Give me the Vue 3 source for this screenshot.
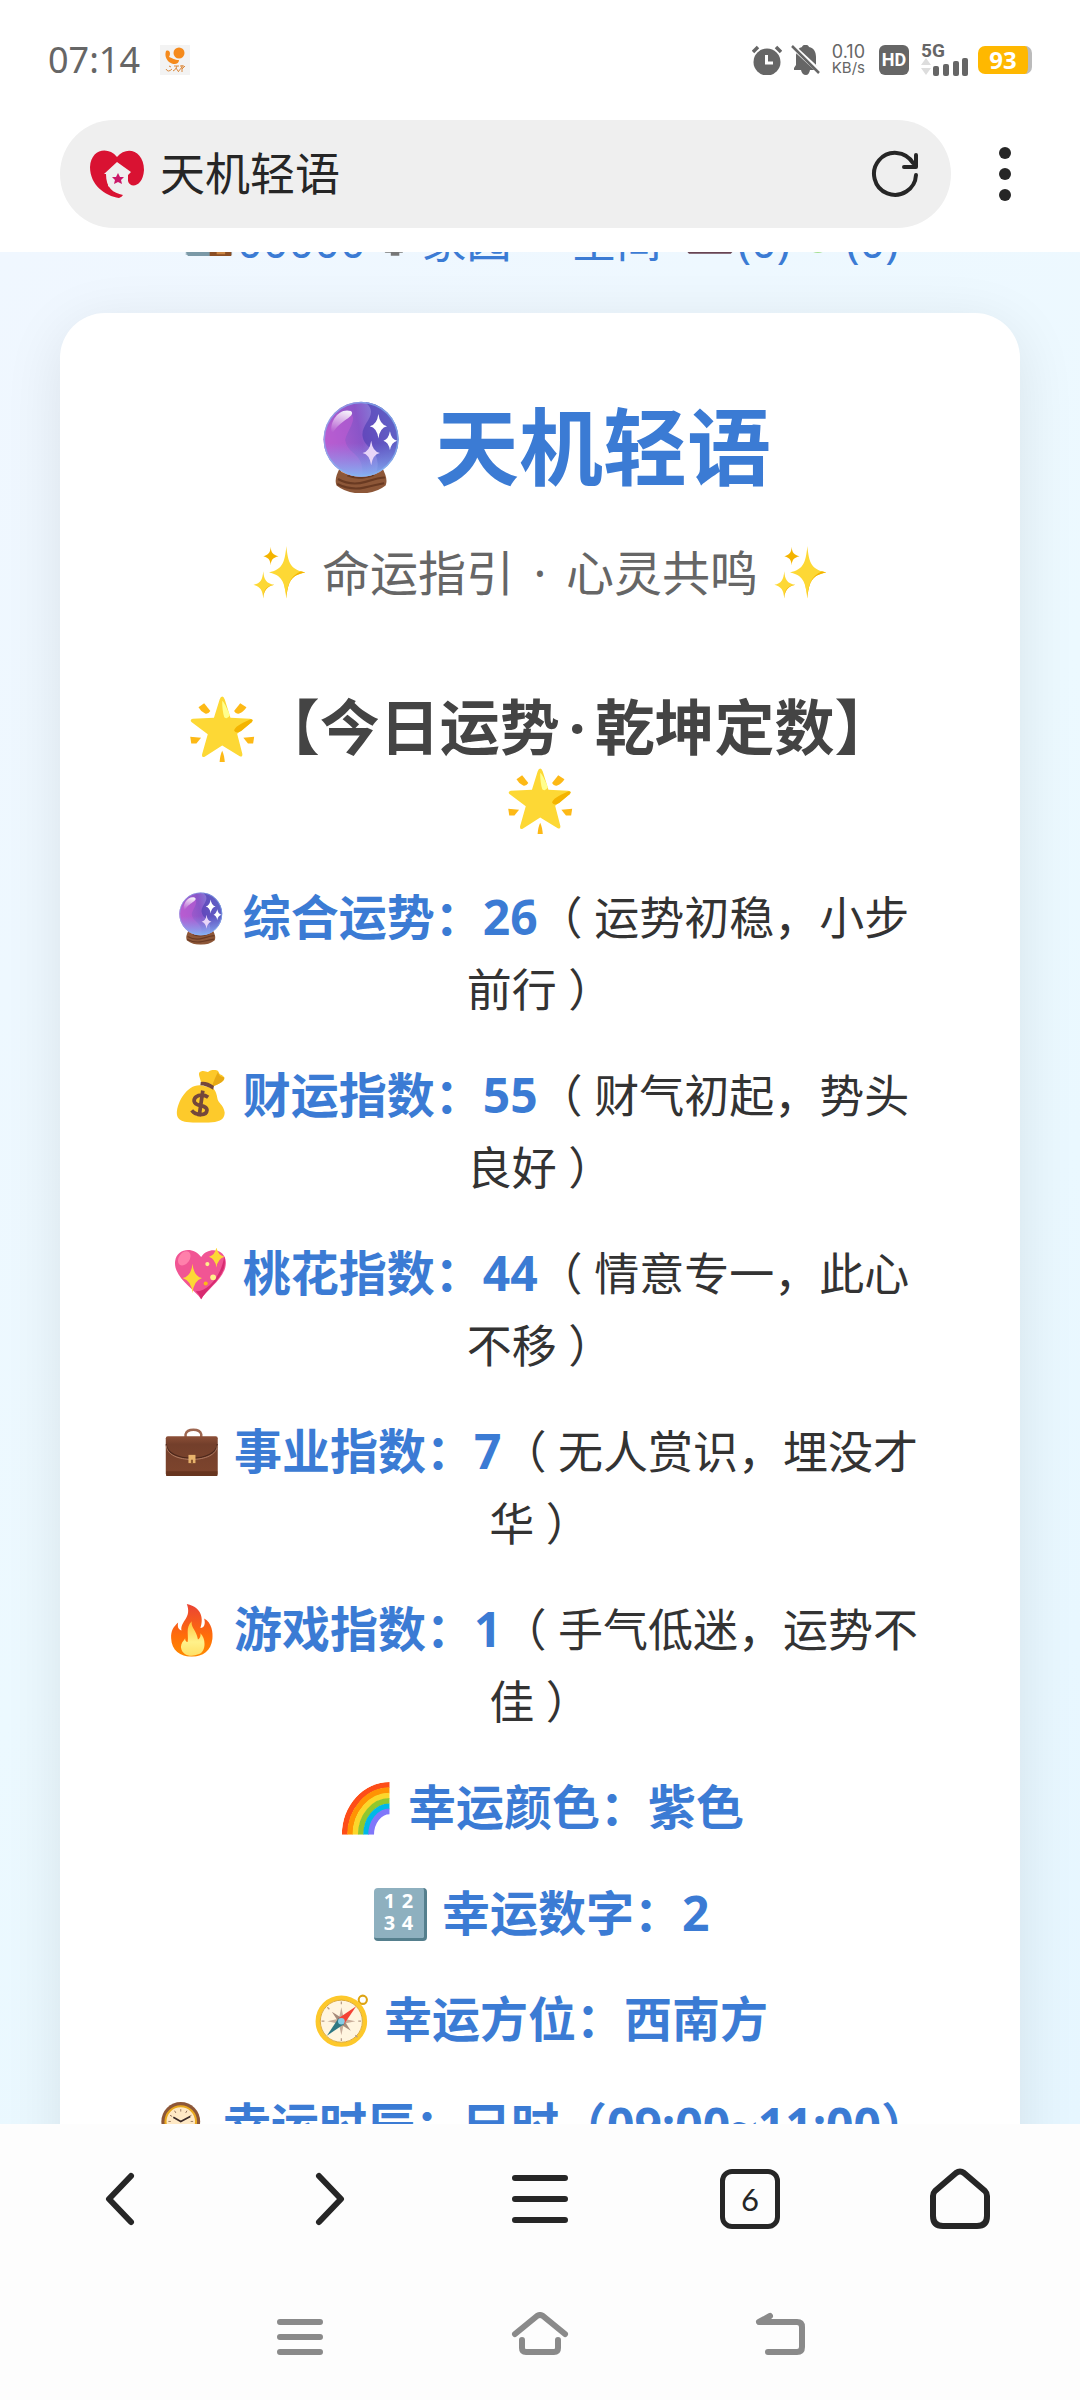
<script setup>
const fortunes = [
  { icon: 'crystal', label: '综合运势', value: '26', note: '运势初稳，小步前行' },
  { icon: 'money', label: '财运指数', value: '55', note: '财气初起，势头良好' },
  { icon: 'heart', label: '桃花指数', value: '44', note: '情意专一，此心不移' },
  { icon: 'briefcase', label: '事业指数', value: '7', note: '无人赏识，埋没才华' },
  { icon: 'fire', label: '游戏指数', value: '1', note: '手气低迷，运势不佳' },
  { icon: 'rainbow', label: '幸运颜色', value: '紫色' },
  { icon: 'numbers', label: '幸运数字', value: '2' },
  { icon: 'compass', label: '幸运方位', value: '西南方' },
  { icon: 'clock', label: '幸运时辰', value: '巳时（09:00~11:00）' },
]
const ticks = Array.from({ length: 12 }, (_, i) => i * 30)
</script>

<template>
  <div class="phone">
    <svg class="defs" width="0" height="0" aria-hidden="true">
      <defs>
        <linearGradient id="g-ball" x1="0" y1="0.6" x2="1" y2="0.4">
          <stop offset="0" stop-color="#b65fd0" /><stop offset="0.5" stop-color="#8a55c8" /><stop offset="1" stop-color="#7fa4e8" />
        </linearGradient>
        <linearGradient id="g-ball-low" x1="0" y1="0" x2="0" y2="1">
          <stop offset="0.55" stop-color="#7f9df0" stop-opacity="0" /><stop offset="1" stop-color="#86b4f4" />
        </linearGradient>
        <linearGradient id="g-shine" x1="0.6" y1="0" x2="0.3" y2="1">
          <stop offset="0" stop-color="#fff" stop-opacity="0.9" /><stop offset="1" stop-color="#fff" stop-opacity="0" />
        </linearGradient>
        <linearGradient id="g-fire" x1="0" y1="0" x2="0" y2="1">
          <stop offset="0" stop-color="#ea4335" /><stop offset="0.6" stop-color="#ff6d0a" /><stop offset="1" stop-color="#ff8a00" />
        </linearGradient>
        <linearGradient id="g-flame" x1="0" y1="0" x2="0" y2="1">
          <stop offset="0" stop-color="#ffc43a" /><stop offset="0.6" stop-color="#fff18a" /><stop offset="1" stop-color="#ffe066" />
        </linearGradient>
        <linearGradient id="g-case" x1="0" y1="0" x2="0" y2="1">
          <stop offset="0" stop-color="#8c4f37" /><stop offset="0.2" stop-color="#733f2b" /><stop offset="1" stop-color="#7e452d" />
        </linearGradient>
        <clipPath id="c-ball"><circle cx="64" cy="53" r="52" /></clipPath>
        <clipPath id="c-rainbow"><path d="M6 128A116 128 0 0 1 122 0V128Z" /></clipPath>
      </defs>

      <symbol id="crystal" viewBox="0 0 128 128">
        <path d="M35 92Q64 108 93 92Q102 108 98 117Q84 128 64 128Q44 128 30 117Q26 108 35 92Z" fill="#8d5738" />
        <path d="M32 108Q50 118 70 112T97 106M31 115Q50 124 68 120T96 114M45 103Q60 110 82 102" fill="none" stroke="#693a22" stroke-width="3" />
        <path d="M37 95Q64 110 91 95V98Q64 112 36 98Z" fill="#fab27b" />
        <circle cx="64" cy="53" r="52" fill="url(#g-ball)" />
        <g clip-path="url(#c-ball)">
          <path d="M68 0C92 18 64 30 66 48C68 68 96 66 84 104L130 60V0Z" fill="#4f3fb4" opacity="0.65" />
          <path d="M30 18C72 10 44 40 42 54C46 76 68 70 66 104H30L4 60Z" fill="#bc5bd2" opacity="0.6" />
          <rect x="10" y="0" width="110" height="106" fill="url(#g-ball-low)" />
          <path d="M24 46C18 30 34 8 50 14C58 22 34 26 24 46Z" fill="url(#g-shine)" />
        </g>
        <circle cx="64" cy="53" r="51" fill="none" stroke="#86b7f0" stroke-width="2" opacity="0.7" />
        <path d="M88 18Q90 33 100 35Q90 37 88 52Q86 37 76 35Q86 33 88 18ZM104 42Q106 54 114 55Q106 57 104 68Q102 57 95 55Q102 53 104 42Z" fill="#fff" />
        <path d="M78 55Q80 70 90 72Q80 74 78 89Q76 74 66 72Q76 70 78 55Z" fill="#e8d5f8" />
      </symbol>

      <symbol id="sparkles" viewBox="0 0 128 128">
        <path d="M80 0C84 43 91 57 126 64C91 71 84 85 80 128C76 85 69 71 38 64C69 57 76 43 80 0Z" fill="#fdd835" />
        <path d="M115 61L126 64C91 71 84 85 80 128C79 98 88 74 115 61Z" fill="#f4b400" />
        <path d="M115 61C85 70 90 80 79 116L72 82L90 66Z" fill="#fdd835" />
        <path d="M24 61C26 83 31 90 51 94C31 99 26 106 24 127C22 106 17 99 0 94C17 90 22 83 24 61Z" fill="#fdd835" />
        <path d="M51 94C34 98 26 106 24 127C24 108 30 97 51 94Z" fill="#f4b400" />
        <path d="M42 2C43 17 48 22 61 25C48 28 43 33 42 47C41 33 36 28 24 25C36 22 41 17 42 2Z" fill="#f4b400" />
      </symbol>

      <symbol id="star" viewBox="0 0 128 128">
        <path d="M64 1Q67 1 69 7L80 42L118 44Q126 45 121 51L93 73L103 112Q104 119 98 117L64 96L30 118Q24 120 25 113L36 74L5 51Q0 46 7 44L48 42L59 7Q61 1 64 1Z" fill="#fdd835" />
        <path d="M119 45Q126 45 121 51L101 68Q91 74 87 67Q88 58 119 45Z" fill="#f4b400" />
        <path d="M64 9Q68 11 79 37Q74 47 68 41Q64 29 64 9Z" fill="#ffff8d" />
        <g fill="#fdb916"><path d="M29 14L41 29Q36 36 31 34Q22 30 18 22Z" /><path d="M99 14L111 22Q106 31 97 34Q91 36 87 29Z" /><path d="M2 79L23 81L14 92H4Z" /><path d="M126 79L105 81L114 92H124Z" /><path d="M64 106Q68 114 69 128H59Q60 114 64 106Z" /></g>
      </symbol>

      <symbol id="money" viewBox="0 0 128 128">
        <path d="M65 32C62 16 54 6 66 3C76 1 81 8 84 3C91-2 104-1 107 4C108 12 117 10 121 18C125 27 104 36 94 40Z" fill="#fdc829" />
        <path d="M92 37Q96 24 106 4Q107 16 121 18Q122 30 92 40Z" fill="#e7a914" />
        <path d="M64 37C32 34 7 76 6 104C6 125 28 128 64 128C101 128 122 125 122 103C120 84 105 80 104 67C102 51 94 44 94 44Z" fill="#fdca2b" />
        <path d="M64 29Q80 27 96 39L94 48Q77 37 63 37Z" fill="#74473b" />
        <path d="M82 66Q75 61 67 61C54 61 47 68 48 76C50 91 80 82 79 98C78 111 53 112 42 98M69 50L60 113" fill="none" stroke="#74473b" stroke-width="9" />
      </symbol>

      <symbol id="heart" viewBox="0 0 128 128">
        <path d="M65 22C80-2 118 1 124 28C132 67 80 99 65 124C49 100-4 70 2 31C7 0 47-4 65 22Z" fill="#f15594" />
        <path d="M121 20C132 67 80 96 65 124Q61 114 52 105C83 106 115 64 121 20Z" fill="#d72b70" />
        <ellipse cx="24" cy="25" rx="13" ry="19" transform="rotate(36 24 25)" fill="#ff80ab" />
        <path d="M44 38Q47 69 67 73Q47 79 44 110Q41 79 20 73Q41 69 44 38ZM102-2Q105 17 121 21Q105 26 102 47Q99 26 84 21Q99 17 102-2Z" fill="#fdd835" />
        <circle cx="80" cy="39" r="5" fill="#fff08a" /><circle cx="94" cy="71" r="7" fill="#fff08a" /><circle cx="76" cy="86" r="5" fill="#fdb916" />
      </symbol>

      <symbol id="briefcase" viewBox="0 0 128 128">
        <path d="M49 29V20Q52 9 68 9Q84 9 87 20V29" fill="none" stroke="#9d6650" stroke-width="6" />
        <rect x="1" y="25" width="126" height="96" rx="5" fill="url(#g-case)" />
        <path d="M2 44C3 66 32 78 64 78C96 78 125 66 126 44" fill="none" stroke="#4d281c" stroke-width="3" />
        <path d="M2 47C3 70 32 81 64 81C96 81 125 70 126 47" fill="none" stroke="#b9846b" stroke-width="2" />
        <rect x="56" y="70" width="17" height="20" fill="#e8b36c" /><path d="M62 82h5v9h-5z" fill="#8b572f" />
        <path d="M2 110H126V121H2Z" fill="#67351f" />
      </symbol>

      <symbol id="fire" viewBox="0 0 128 128">
        <path d="M52 0C91 8 92 39 85 58C94 58 98 48 94 35C113 45 116 70 114 85C111 113 91 128 64 128C36 128 15 112 14 83C13 65 20 55 31 45C29 55 31 62 39 64C36 41 65 34 52 0Z" fill="url(#g-fire)" />
        <path d="M64 42C61 57 76 64 79 86C84 83 86 78 85 71C99 84 99 116 80 122C62 130 40 124 38 106C37 96 43 91 48 83C48 88 50 92 54 92C57 74 48 58 64 42Z" fill="url(#g-flame)" />
      </symbol>

      <symbol id="rainbow" viewBox="0 0 128 128">
        <g clip-path="url(#c-rainbow)" fill="none" stroke-width="14">
          <ellipse cx="122" cy="128" rx="109" ry="121" stroke="#fd4d18" />
          <ellipse cx="122" cy="128" rx="96" ry="108" stroke="#ff9303" />
          <ellipse cx="122" cy="128" rx="83" ry="95" stroke="#fbd72b" />
          <ellipse cx="122" cy="128" rx="70" ry="82" stroke="#91c72e" />
          <ellipse cx="122" cy="128" rx="57" ry="69" stroke="#00b8e8" />
          <ellipse cx="122" cy="128" rx="45" ry="57" stroke="#8077fa" />
        </g>
      </symbol>

      <symbol id="compass" viewBox="0 0 128 128">
        <circle cx="115" cy="14" r="10" fill="none" stroke="#dda414" stroke-width="5" />
        <circle cx="63" cy="66" r="57" fill="#fff5df" stroke="#fdc82b" stroke-width="11" />
        <circle cx="63" cy="66" r="51" fill="none" stroke="#d49c22" stroke-width="2" />
        <path d="M63 32L69 60L97 66L69 72L63 100L57 72L29 66L57 60Z" fill="#c8ad9a" />
        <path d="M40 43L67 60L86 89L59 72Z" fill="#a58b7a" />
        <path d="M99 30L70 73L56 59Z" fill="#f44336" /><path d="M28 101L56 59L70 73Z" fill="#2f7883" />
        <circle cx="63" cy="66" r="8" fill="#86cce5" />
        <path d="M63 18v7M63 107v7M15 66h7M104 66h7M29 32l5 5M97 100l5 5" stroke="#b59b87" stroke-width="3" />
      </symbol>

      <symbol id="clock" viewBox="0 0 128 128">
        <path d="M10 128L18 84H110L118 128Z" fill="#8d5738" />
        <circle cx="64" cy="52" r="47" fill="#8d5738" />
        <circle cx="64" cy="52" r="37" fill="#ffe9c5" stroke="#e9a91f" stroke-width="5" />
        <path v-for="t in ticks" :key="t" d="M64 22v6" :transform="`rotate(${t} 64 52)`" stroke="#8b6a55" stroke-width="2" />
        <path d="M46 42L64 52L87 40" fill="none" stroke="#3c2b28" stroke-width="4" />
      </symbol>

      <symbol id="house" viewBox="0 0 128 128">
        <path d="M4 56L64 10L124 56V124H4Z" fill="#a9bec9" /><path d="M2 108H70V128H10Z" fill="#7b99a7" />
        <path d="M66 60H122V128H66Z" fill="#8b4e24" /><path d="M84 70H106V122H84Z" fill="#ca8544" />
      </symbol>
      <symbol id="pin" viewBox="0 0 128 128"><path d="M30 108H98L86 118H78V126H56V118H42Z" fill="#777" /></symbol>
      <symbol id="screen" viewBox="0 0 128 128"><path d="M14 30H114V112H14Z" fill="#9b7f91" /><path d="M2 112H126L118 121H10Z" fill="#684453" /></symbol>
      <symbol id="leaf" viewBox="0 0 128 128"><path d="M64 20Q98 76 84 112Q64 126 44 112Q30 76 64 20Z" fill="#a5df91" /></symbol>
    </svg>

    <header>
      <div class="status">
        <span class="time">07:14</span>
        <svg class="app-badge" viewBox="0 0 30 30" aria-hidden="true"><rect width="30" height="30" fill="#f3f3f3" /><g fill="#f58a1c"><circle cx="19" cy="8" r="5.500" /><path d="M6 6C10 4 11 9 9 12C13 13 14 15 19 15C19 20 13 20 9 17C5 13 5 9 6 6Z" /></g><path d="M6 24q2 4 6 0m-3-3 2 1m3-1h5m-2 0q-1 4-4 5m3-3 2 3m2-5h4m-2-1v7m0-5-4 5m4-3 3-3" fill="none" stroke="#dc893c" /></svg>
        <div class="status-right">
          <svg class="s-icon" viewBox="0 0 30 30" aria-hidden="true"><circle cx="15" cy="17" r="13.500" fill="#666" /><path d="M1 7L6 2M29 7L24 2" stroke="#666" stroke-width="3.500" /><path d="M14.500 10V18H21" fill="none" stroke="#fff" stroke-width="3" /></svg>
          <svg class="s-icon" viewBox="0 0 30 30" aria-hidden="true"><path d="M4 25V23L6 20V10C7 4 9 3 12 2C13-1 18-1 19 2C24 3 26 7 26 12V20L28 23V25H20Q19 30 16 30Q12 30 11 25Z" fill="#666" /><path d="M1 0L30 27" stroke="#fff" stroke-width="5" /><path d="M2 1L29 28" stroke="#666" stroke-width="2.500" /></svg>
          <span class="speed"><span class="rate">0.10</span><span>KB/s</span></span>
          <span class="hd">HD</span>
          <span class="signal"><span>5G</span><svg viewBox="0 0 48 18" aria-hidden="true"><path d="M5 0L10 7H0ZM5 17L0 10H10Z" fill="#ddd" /><g fill="#666"><rect x="12" y="8" width="6" height="10" rx="2" /><rect x="22" y="6" width="6" height="12" rx="2" /><rect x="32" y="3" width="6" height="15" rx="2" /><rect x="41" y="0" width="6" height="18" rx="2" /></g></svg></span>
          <span class="battery">93</span>
        </div>
      </div>
      <div class="toolbar">
        <div class="address">
          <svg class="favicon" viewBox="0 0 54 48" aria-hidden="true"><path d="M27 7C18-4 1-1 0 17C0 35 15 46 29 48Q32 47 33 45C23 43 16 38 16 24H14L27 12L41 22L38 25V31C40 39 53 37 54 20C54 1 37-5 27 7Z" fill="#d91232" /><path d="M20 20L27 13L39 23L36 26V40H25L18 36Z" fill="#efefef" /><path d="M28 23L30 27L34 27L31 30L32 34L28 32L24 34L25 30L22 27L26 27Z" fill="#cb1767" /></svg>
          <span class="site">天机轻语</span>
          <button class="plain" aria-label="刷新"><svg width="48" height="50" viewBox="0 0 48 50" fill="none" stroke="#262626" stroke-width="4" stroke-linecap="round" stroke-linejoin="round"><path d="M45 26A21 21 0 1 1 42 14M45 6V18H33" /></svg></button>
        </div>
        <button class="plain more" aria-label="更多"><svg width="16" height="56" viewBox="0 0 16 56" fill="#262626"><circle cx="8" cy="7" r="6" /><circle cx="8" cy="28" r="6" /><circle cx="8" cy="49" r="6" /></svg></button>
      </div>
    </header>

    <main>
      <nav class="links" aria-label="站内链接">
        <a href="#"><svg class="emoji"><use href="#house" /></svg>00000<svg class="emoji"><use href="#pin" /></svg></a>
        <a href="#">家园</a><a href="#" class="space">空间</a>
        <a href="#"><svg class="emoji"><use href="#screen" /></svg>(0)</a><a href="#"><svg class="emoji"><use href="#leaf" /></svg>(0)</a>
      </nav>
      <article class="card">
        <h1><svg class="emoji" aria-hidden="true"><use href="#crystal" /></svg> 天机轻语</h1>
        <p class="subtitle"><svg class="emoji" aria-hidden="true"><use href="#sparkles" /></svg> 命运指引 <span class="dot">·</span> 心灵共鸣 <svg class="emoji" aria-hidden="true"><use href="#sparkles" /></svg></p>
        <h2><svg class="emoji" aria-hidden="true"><use href="#star" /></svg>【今日运势<span class="dot">·</span>乾坤定数】<svg class="emoji" aria-hidden="true"><use href="#star" /></svg></h2>
        <p v-for="f in fortunes" :key="f.label" class="fortune"><strong><span v-if="f.icon === 'numbers'" class="keys"><span>1</span><span>2</span><span>3</span><span>4</span></span><svg v-else class="emoji" aria-hidden="true"><use :href="'#' + f.icon" /></svg> {{ f.label }}：{{ f.value }}</strong><span v-if="f.note">（ {{ f.note }} ）</span></p>
      </article>
    </main>

    <footer>
      <nav class="browser-nav" aria-label="浏览器">
        <button class="plain" aria-label="后退"><svg width="64" height="64" viewBox="0 0 64 64"><path d="M43 9L21 32L43 55" /></svg></button>
        <button class="plain" aria-label="前进"><svg width="64" height="64" viewBox="0 0 64 64"><path d="M21 9L43 32L21 55" /></svg></button>
        <button class="plain" aria-label="菜单"><svg width="64" height="64" viewBox="0 0 64 64"><path d="M7 11H57M7 32H57M7 53H57" /></svg></button>
        <button class="plain" aria-label="标签页"><span class="tabs">6</span></button>
        <button class="plain" aria-label="主页"><svg width="64" height="64" viewBox="0 0 64 64"><path d="M28 6Q32 3 36 6L57 24Q59 26 59 29V49Q59 59 49 59H15Q5 59 5 49V29Q5 26 7 24Z" /></svg></button>
      </nav>
      <nav class="system-nav" aria-label="系统">
        <button class="plain" aria-label="最近任务"><svg width="60" height="50" viewBox="0 0 60 50"><path d="M10 10H50M10 25H50M10 40H50" /></svg></button>
        <button class="plain" aria-label="桌面"><svg width="60" height="50" viewBox="0 0 60 50"><path d="M5 22L27 4Q30 2 33 4L55 22M12 28V36Q12 40 16 40H44Q48 40 48 36V28" /></svg></button>
        <button class="plain" aria-label="返回"><svg width="60" height="50" viewBox="0 0 60 50"><path d="M20 4L9 10H47Q52 10 52 15V35Q52 40 47 40H18" /></svg></button>
      </nav>
    </footer>
  </div>
</template>

<style>
body {
  background: #fff;
}
</style>

<style scoped>
.phone {
  display: flex;
  flex-direction: column;
  height: 100vh;
  font-family: "Noto Sans", "Noto Sans CJK SC", sans-serif;
  color: #333;
  background: #fdfdfd;
}
.defs {
  position: absolute;
}
.phone svg {
  flex: none;
}
header {
  background: #fff;
}
button {
  font-family: inherit;
}
.plain {
  display: flex;
  align-items: center;
  justify-content: center;
  padding: 0;
  border: 0;
  background: none;
}
.status {
  display: flex;
  align-items: center;
  height: 120px;
  padding: 0 48px;
  box-sizing: border-box;
  color: #666;
}
.time {
  font-size: 36px;
  line-height: 44px;
}
.app-badge {
  width: 30px;
  height: 30px;
  margin-left: 20px;
}
.status-right {
  display: flex;
  align-items: center;
  margin-left: auto;
}
.s-icon {
  width: 30px;
  height: 30px;
  margin-right: 8px;
}
.speed {
  display: flex;
  flex-direction: column;
  align-items: center;
  margin: 0 14px 0 4px;
  font: 15px/16px Inter, sans-serif;
}
.rate {
  font-size: 18px;
}
.hd {
  width: 30px;
  border-radius: 6px;
  color: #fff;
  background: #666;
  text-align: center;
  font: 700 18px/30px Roboto, sans-serif;
}
.signal {
  display: flex;
  flex-direction: column;
  width: 48px;
  margin: 0 9px 0 12px;
  font: 700 19px/14px Roboto, sans-serif;
}
.signal svg {
  width: 48px;
  height: 18px;
}
.battery {
  width: 50px;
  border-right: 4px solid #bbb;
  border-radius: 7px;
  color: #fff;
  background: #ffb800;
  text-align: center;
  font: 700 24px/28px "Noto Sans", sans-serif;
}
.toolbar {
  display: flex;
  align-items: center;
  padding: 0 67px 24px 60px;
}
.address {
  display: flex;
  flex: 1;
  align-items: center;
  height: 108px;
  padding: 0 32px 0 30px;
  box-sizing: border-box;
  border-radius: 54px;
  background: #efefef;
}
.favicon {
  width: 54px;
  height: 48px;
}
.site {
  flex: 1;
  margin-left: 16px;
  color: #262626;
  font-size: 45px;
  line-height: 60px;
}
.more {
  margin-left: 46px;
}
main {
  flex: 1;
  min-height: 0;
  overflow: hidden;
  background: linear-gradient(135deg, #f0f7ff 0%, #ecf9ff 50%, #e6f6ff 100%);
}
.emoji {
  display: inline-block;
  width: 1.24em;
  height: 1.1em;
  vertical-align: -0.17em;
}
.links {
  display: flex;
  justify-content: center;
  height: 72px;
  margin-top: -47px;
  font-size: 45px;
  line-height: 72px;
}
.links a {
  color: #3b7bd4;
  text-decoration: none;
}
.links .space {
  margin: 0 20px 0 60px;
}
.links .emoji {
  vertical-align: 2px;
}
.card {
  margin: 36px 60px 0;
  padding: 79px 90px 90px;
  border-radius: 45px;
  background: #fff;
  box-shadow: 0 12px 60px rgba(0, 0, 0, 0.09);
  text-align: center;
}
h1 {
  margin: 0;
  color: #3b7bd4;
  font-size: 84px;
  line-height: 110px;
}
.subtitle {
  margin: 41px 0 0;
  color: #666;
  font-size: 48px;
  line-height: 60px;
}
.dot {
  margin: 0 0.15em;
}
h2 {
  margin: 88px 0 47px;
  color: #444;
  font-size: 60px;
  line-height: 72px;
}
h2 .emoji,
.fortune .emoji {
  vertical-align: -0.2em;
}
.fortune {
  margin: 0 0 34px;
  font-size: 45px;
  line-height: 72px;
}
.fortune strong {
  color: #3b7bd4;
  font-size: 48px;
  line-height: 48px;
  white-space: nowrap;
}
.keys {
  display: inline-grid;
  grid-template-columns: 1fr 1fr;
  width: 53px;
  height: 53px;
  margin: 0 3px 4px;
  padding: 2px 7px 4px;
  box-sizing: border-box;
  border-right: 3px solid #557f8d;
  border-bottom: 3px solid #557f8d;
  border-radius: 4px;
  color: #fff;
  background: #8eb0bf;
  font-size: 20px;
  line-height: 22px;
  vertical-align: text-bottom;
}
footer {
  flex: none;
}
.browser-nav {
  display: flex;
  align-items: center;
  height: 150px;
  padding: 0 15px;
}
.browser-nav > *,
.system-nav > * {
  flex: 1;
}
.browser-nav svg,
.system-nav svg {
  fill: none;
  stroke: #262626;
  stroke-width: 6px;
  stroke-linecap: round;
  stroke-linejoin: round;
}
.tabs {
  width: 60px;
  height: 60px;
  box-sizing: border-box;
  border: 5px solid #262626;
  border-radius: 12px;
  color: #262626;
  font: 31px/50px Lato, sans-serif;
}
.system-nav {
  display: flex;
  align-items: center;
  height: 126px;
  padding: 0 180px;
}
.system-nav svg {
  stroke: #8a8a8a;
}
</style>
